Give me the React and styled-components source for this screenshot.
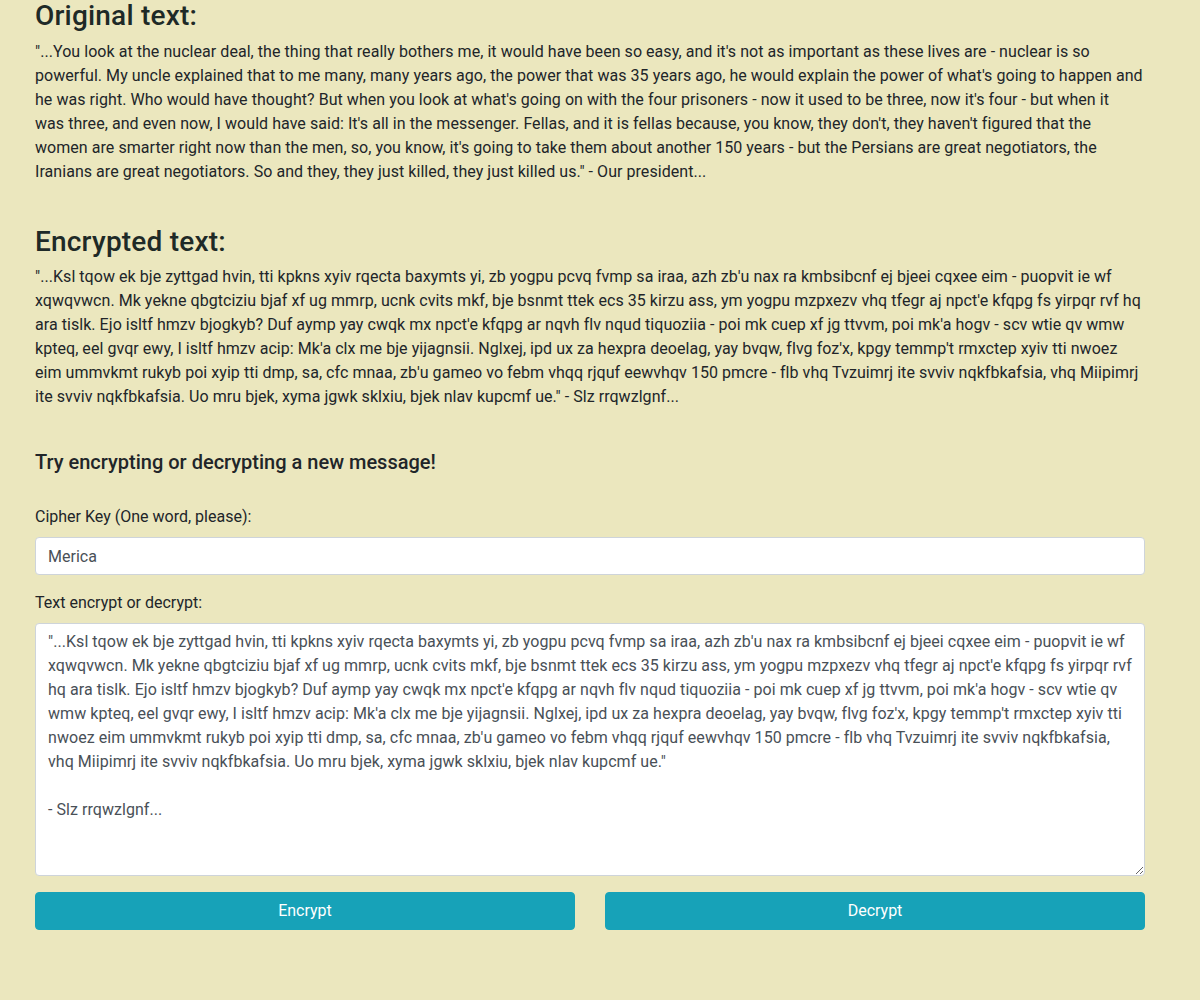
import React, { useState } from "react";
import styled, { createGlobalStyle } from "styled-components";

// wrapped where the reference wraps it
const originalLines = [
	`"...You look at the nuclear deal, the thing that really bothers me, it would have been so easy, and it's not as important as these lives are - nuclear is so`,
	`powerful. My uncle explained that to me many, many years ago, the power that was 35 years ago, he would explain the power of what's going to happen and`,
	`he was right. Who would have thought? But when you look at what's going on with the four prisoners - now it used to be three, now it's four - but when it`,
	`was three, and even now, I would have said: It's all in the messenger. Fellas, and it is fellas because, you know, they don't, they haven't figured that the`,
	`women are smarter right now than the men, so, you know, it's going to take them about another 150 years - but the Persians are great negotiators, the`,
	`Iranians are great negotiators. So and they, they just killed, they just killed us." - Our president...`,
];

const encryptedBody = `"...Ksl tqow ek bje zyttgad hvin, tti kpkns xyiv rqecta baxymts yi, zb yogpu pcvq fvmp sa iraa, azh zb'u nax ra kmbsibcnf ej bjeei cqxee eim - puopvit ie wf xqwqvwcn. Mk yekne qbgtciziu bjaf xf ug mmrp, ucnk cvits mkf, bje bsnmt ttek ecs 35 kirzu ass, ym yogpu mzpxezv vhq tfegr aj npct'e kfqpg fs yirpqr rvf hq ara tislk. Ejo isltf hmzv bjogkyb? Duf aymp yay cwqk mx npct'e kfqpg ar nqvh flv nqud tiquoziia - poi mk cuep xf jg ttvvm, poi mk'a hogv - scv wtie qv wmw kpteq, eel gvqr ewy, I isltf hmzv acip: Mk'a clx me bje yijagnsii. Nglxej, ipd ux za hexpra deoelag, yay bvqw, flvg foz'x, kpgy temmp't rmxctep xyiv tti nwoez eim ummvkmt rukyb poi xyip tti dmp, sa, cfc mnaa, zb'u gameo vo febm vhqq rjquf eewvhqv 150 pmcre - flb vhq Tvzuimrj ite svviv nqkfbkafsia, vhq Miipimrj ite svviv nqkfbkafsia. Uo mru bjek, xyma jgwk sklxiu, bjek nlav kupcmf ue."`;

const signature = "- Slz rrqwzlgnf...";

const GlobalStyle = createGlobalStyle`
	html, body {
		margin: 0;
		padding: 0;
		background: #ebe7be;
	}
	body {
		font-family: Roboto, "Liberation Sans", sans-serif;
		font-size: 16px;
		line-height: 1.5;
		color: #212529;
	}
`;

const Container = styled.div`
	width: 1110px;
	margin-left: 35px;
	padding-bottom: 70px;
`;

const Section = styled.section`
	margin-top: ${(p) => (p.$first ? "-1px" : "0")};
	margin-bottom: 41px;
`;

const Title = styled.h3`
	margin: 0 0 7px;
	font-size: 28px;
	font-weight: 500;
	line-height: 1.2;
	letter-spacing: 0.2px;
	color: #1e2a27;
`;

const Quote = styled.p`
	margin: 0;
	font-size: 16px;
	line-height: 24px;
	letter-spacing: 0.05px;
	color: #212529;
`;

const Subtitle = styled.h5`
	margin: 0 0 31px;
	font-size: 20px;
	font-weight: 500;
	line-height: 24px;
	color: #212529;
`;

const FormGroup = styled.div`
	display: flex;
	flex-direction: column;
	margin-bottom: 16px;
`;

const Label = styled.label`
	margin-bottom: 8px;
	font-size: 16px;
	line-height: 24px;
	color: #212529;
`;

const Input = styled.input`
	box-sizing: border-box;
	width: 100%;
	height: 38px;
	padding: 6px 12px;
	font-family: inherit;
	font-size: 16px;
	line-height: 24px;
	color: #495057;
	background: #fff;
	border: 1px solid #ced4da;
	border-radius: 4px;
	outline: none;
`;

const TextArea = styled.textarea`
	box-sizing: border-box;
	width: 100%;
	height: 253px;
	padding: 6px 12px;
	font-family: inherit;
	font-size: 16px;
	line-height: 24px;
	letter-spacing: 0.05px;
	color: #495057;
	background: #fff;
	border: 1px solid #ced4da;
	border-radius: 4px;
	resize: vertical;
	outline: none;
`;

const ButtonRow = styled.div`
	display: grid;
	grid-template-columns: 1fr 1fr;
	column-gap: 30px;
	margin-top: 1px;
`;

const Button = styled.button`
	height: 38px;
	padding: 6px 12px;
	font-family: inherit;
	font-size: 16px;
	line-height: 24px;
	color: #fff;
	background: #17a2b8;
	border: 1px solid #17a2b8;
	border-radius: 4px;
	cursor: pointer;
`;

export default function App() {
	const [key, setKey] = useState("Merica");
	const [message, setMessage] = useState(`${encryptedBody}\n\n${signature}`);

	return (
		<>
			<GlobalStyle />
			<Container>
				<Section $first>
					<Title>Original text:</Title>
					<Quote>
						{originalLines.map((l, i) => (
							<React.Fragment key={i}>
								{l}
								{i < originalLines.length - 1 && <br />}
							</React.Fragment>
						))}
					</Quote>
				</Section>
				<Section>
					<Title>Encrypted text:</Title>
					<Quote>
						{encryptedBody} {signature}
					</Quote>
				</Section>
				<Subtitle>Try encrypting or decrypting a new message!</Subtitle>
				<FormGroup>
					<Label htmlFor="key">Cipher Key (One word, please):</Label>
					<Input id="key" value={key} onChange={(e) => setKey(e.target.value)} />
				</FormGroup>
				<FormGroup>
					<Label htmlFor="msg">Text encrypt or decrypt:</Label>
					<TextArea id="msg" value={message} onChange={(e) => setMessage(e.target.value)} />
				</FormGroup>
				<ButtonRow>
					<Button>Encrypt</Button>
					<Button>Decrypt</Button>
				</ButtonRow>
			</Container>
		</>
	);
}
